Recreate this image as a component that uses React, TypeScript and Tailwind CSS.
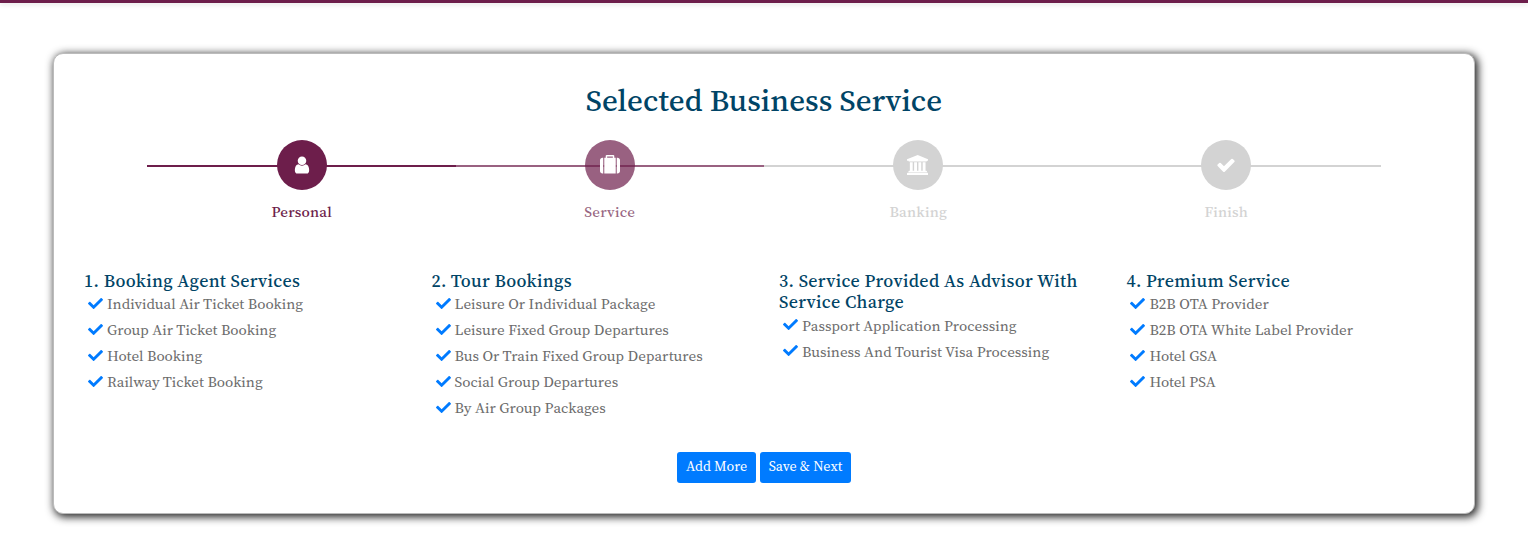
import { FaCheck } from "react-icons/fa";

type Step = {
  label: string;
  line: string;
  circle: string;
  text: string;
  viewBox: string;
  iconClass: string;
  path: string;
};

const steps: Step[] = [
  {
    label: "Personal",
    line: "bg-[#6d1e4b]",
    circle: "ml-px bg-[#6d1e4b]",
    text: "ml-px text-[#6d1e4b]",
    viewBox: "0 0 1792 1792",
    iconClass: "h-5 w-5",
    path: "M1536 1399q0 109-62.5 187t-150.5 78h-854q-88 0-150.5-78t-62.5-187q0-85 8.5-160.5t31.5-152 58.5-131 94-89 134.5-34.5q131 128 313 128t313-128q76 0 134.5 34.5t94 89 58.5 131 31.5 152 8.5 160.5zm-256-887q0 159-112.5 271.5t-271.5 112.5-271.5-112.5-112.5-271.5 112.5-271.5 271.5-112.5 271.5 112.5 112.5 271.5z",
  },
  {
    label: "Service",
    line: "bg-[#6d1e4b]/70",
    circle: "bg-[#6d1e4b]/70",
    text: "text-[#6d1e4b]/70",
    viewBox: "0 0 1792 1792",
    iconClass: "h-5 w-5",
    path: "M640 256h512v-128h-512v128zm-352 0v1408h-64q-92 0-158-66t-66-158v-960q0-92 66-158t158-66h64zm1120 0v1408h-1024v-1408h128v-160q0-40 28-68t68-28h576q40 0 68 28t28 68v160h128zm384 224v960q0 92-66 158t-158 66h-64v-1408h64q92 0 158 66t66 158z",
  },
  {
    label: "Banking",
    line: "bg-[#d3d3d3]",
    circle: "bg-[#d3d3d3]",
    text: "text-[#d3d3d3]",
    viewBox: "0 0 1920 1792",
    iconClass: "mr-px h-5 w-[21.4px]",
    path: "M960 0l960 384v128h-128q0 26-20.5 45t-48.5 19h-1526q-28 0-48.5-19t-20.5-45h-128v-128zM256 640h256v768h128v-768h256v768h128v-768h256v768h128v-768h256v768h59q28 0 48.5 19t20.5 45v64h-1664v-64q0-26 20.5-45t48.5-19h59v-768zM1851 1600q28 0 48.5 19t20.5 45v128h-1920v-128q0-26 20.5-45t48.5-19h1782z",
  },
  {
    label: "Finish",
    line: "bg-[#d3d3d3]",
    circle: "mr-px bg-[#d3d3d3]",
    text: "mr-px text-[#d3d3d3]",
    viewBox: "0 0 1792 1792",
    iconClass: "h-5 w-5",
    path: "M1671 566q0 40-28 68l-724 724-136 136q-28 28-68 28t-68-28l-136-136-362-362q-28-28-28-68t28-68l136-136q28-28 68-28t68 28l294 295 656-657q28-28 68-28t68 28l136 136q28 28 28 68z",
  },
];

const groups = [
  {
    title: "1. Booking Agent Services",
    items: ["Individual Air Ticket Booking", "Group Air Ticket Booking", "Hotel Booking", "Railway Ticket Booking"],
  },
  {
    title: "2. Tour Bookings",
    items: [
      "Leisure Or Individual Package",
      "Leisure Fixed Group Departures",
      "Bus Or Train Fixed Group Departures",
      "Social Group Departures",
      "By Air Group Packages",
    ],
  },
  {
    title: "3. Service Provided As Advisor With Service Charge",
    items: ["Passport Application Processing", "Business And Tourist Visa Processing"],
  },
  {
    title: "4. Premium Service",
    items: ["B2B OTA Provider", "B2B OTA White Label Provider", "Hotel GSA", "Hotel PSA"],
  },
];

export default function App() {
  return (
    <div className="h-[559px] overflow-hidden bg-white font-['Source_Serif_4','Source_Serif_Pro','Liberation_Serif',serif]">
      <div className="h-[3px] bg-[#6d1e4b] shadow-[0_2px_4px_rgba(0,0,0,0.1)]" />
      <main className="mx-[53px] mt-[50px] h-[461px] rounded-[10px] border border-[#bbb] bg-white pt-[25px] shadow-[2px_2px_8px_1px_#222]">
        <h1 className="h-[42px] text-center text-[31px] leading-[42px] font-medium tracking-[0.06px] text-[#004466]">
          Selected Business Service
        </h1>
        <ol className="mx-[93px] mt-[19px] flex">
          {steps.map((s) => (
            <li key={s.label} className="flex w-1/4 flex-col items-center">
              <div className="grid h-[50px] w-full place-items-center">
                <span className={`col-start-1 row-start-1 mt-0.5 h-0.5 w-full ${s.line}`} />
                <span className={`z-10 col-start-1 row-start-1 grid size-[50px] place-items-center rounded-full ${s.circle}`}>
                  <svg viewBox={s.viewBox} className={`${s.iconClass} fill-white`}>
                    <path d={s.path} />
                  </svg>
                </span>
              </div>
              <span className={`mt-[11px] text-[15px] leading-[22px] font-medium tracking-[0.22px] ${s.text}`}>{s.label}</span>
            </li>
          ))}
        </ol>
        <div className="mt-[47px] ml-[30px] grid h-[182px] grid-cols-[347.5px_347.5px_347.4px_300px]">
          {groups.map((g) => (
            <section key={g.title}>
              <h2 className="max-w-[317px] pb-[0.5px] text-[18px] leading-[21.2px] font-medium tracking-[0.31px] text-[#004466]">
                {g.title}
              </h2>
              <ul>
                {g.items.map((t) => (
                  <li key={t} className="flex h-[26px] items-center pl-1 text-[15px] text-[#6c6c6c]">
                    <FaCheck className="mr-1 mb-0.5 size-[15px] text-[#007bff]" />
                    <span className="whitespace-nowrap">{t}</span>
                  </li>
                ))}
              </ul>
            </section>
          ))}
        </div>
        <div className="flex justify-center gap-1">
          <button className="h-[31px] w-[79px] rounded-[3px] bg-[#007bff] pb-0.5 text-[14px] text-white">Add More</button>
          <button className="h-[31px] w-[91px] rounded-[3px] bg-[#007bff] pb-0.5 text-[14px] text-white">Save &amp; Next</button>
        </div>
      </main>
    </div>
  );
}
